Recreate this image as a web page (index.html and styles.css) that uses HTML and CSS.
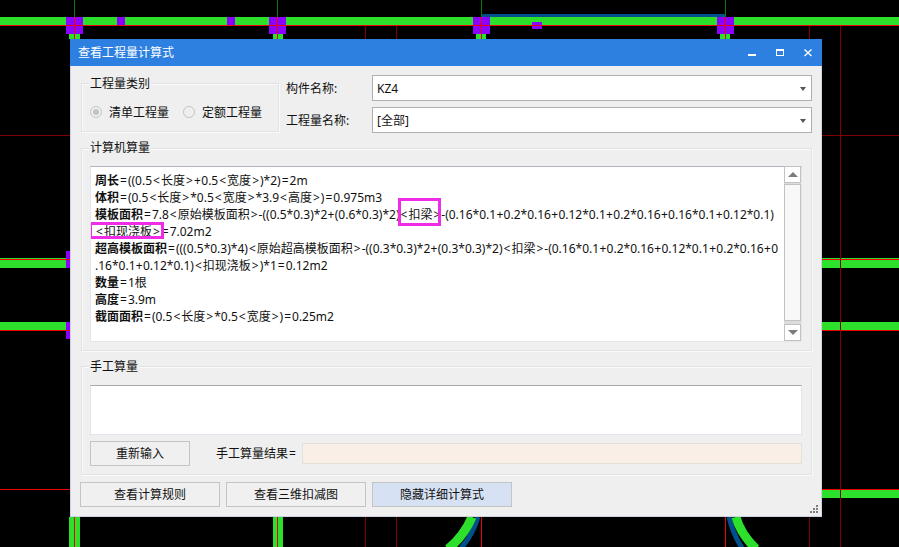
FILE: index.html
```html
<!DOCTYPE html>
<html lang="zh-CN">
<head>
<meta charset="utf-8">
<title>查看工程量计算式</title>
<link rel="stylesheet" href="styles.css">
</head>
<body>
<main class="desktop">
  <svg class="cad" width="899" height="547" viewBox="0 0 899 547" shape-rendering="crispEdges">
    <rect class="blue" x="482" y="14" width="243" height="3"/>
    <rect class="green" x="0" y="17" width="899" height="8"/>
    <rect class="green" x="0" y="258" width="899" height="10"/>
    <rect class="green" x="0" y="322" width="899" height="9"/>
    <rect class="green" x="822" y="490" width="77" height="8"/>
    <rect class="green" x="69" y="34" width="11" height="5"/>
    <rect class="green" x="273" y="34" width="10" height="5"/>
    <rect class="green" x="476" y="34" width="10" height="5"/>
    <rect class="green" x="720" y="34" width="10" height="5"/>
    <rect class="green" x="69" y="517" width="11" height="30"/>
    <rect class="green" x="273" y="517" width="10" height="30"/>
    <g shape-rendering="auto">
      <path class="arc-blue" d="M478 517Q472 536 461 548"/>
      <path class="arc-green" d="M472 517Q464 536 448 549"/>
      <path class="arc-blue" d="M729 517Q733 534 742 548"/>
      <path class="arc-green" d="M736 517Q740 533 756 549"/>
    </g>
    <rect class="dgreen" x="74" y="0" width="1" height="17"/>
    <rect class="dgreen" x="277" y="0" width="1" height="17"/>
    <rect class="dgreen" x="481" y="0" width="1" height="17"/>
    <rect class="dgreen" x="725" y="0" width="1" height="17"/>
    <rect class="purple" x="66" y="17" width="17" height="17"/>
    <rect class="purple" x="269" y="17" width="17" height="17"/>
    <rect class="purple" x="473" y="17" width="17" height="17"/>
    <rect class="purple" x="717" y="17" width="17" height="17"/>
    <rect class="purple" x="117" y="17" width="8" height="8"/>
    <rect class="purple" x="227" y="17" width="8" height="8"/>
    <rect class="purple" x="532" y="22" width="10" height="7"/>
    <rect class="purple" x="66" y="251" width="4" height="17"/>
    <rect class="purple" x="66" y="322" width="4" height="17"/>
    <rect class="red" x="0" y="25" width="899" height="1"/>
    <rect class="red" x="0" y="259" width="899" height="1"/>
    <rect class="red" x="0" y="330" width="899" height="1"/>
    <rect class="red" x="0" y="489" width="899" height="1"/>
    <rect class="red" x="74" y="17" width="1" height="22"/>
    <rect class="red" x="277" y="17" width="1" height="22"/>
    <rect class="red" x="481" y="17" width="1" height="22"/>
    <rect class="red" x="725" y="17" width="1" height="22"/>
    <rect class="red" x="74" y="517" width="1" height="30"/>
    <rect class="red" x="277" y="517" width="1" height="30"/>
    <rect class="red" x="481" y="517" width="1" height="30"/>
    <rect class="red" x="725" y="517" width="1" height="30"/>
    <rect class="dred" x="0" y="135" width="899" height="1"/>
    <rect class="dred" x="365" y="26" width="1" height="13"/>
    <rect class="dred" x="396" y="26" width="1" height="13"/>
    <rect class="dred" x="365" y="517" width="1" height="30"/>
    <rect class="dred" x="396" y="517" width="1" height="30"/>
    <rect class="dred" x="809" y="26" width="1" height="521"/>
    <rect class="dred" x="840" y="26" width="1" height="521"/>
  </svg>

  <section class="dialog">
    <header class="titlebar">
      <h1 class="title">查看工程量计算式</h1>
      <div class="winctl">
        <svg class="winicon" width="8" height="8" viewBox="0 0 8 8" shape-rendering="crispEdges"><rect x="0" y="5" width="8" height="2" fill="#fff"/></svg>
        <svg class="winicon" width="8" height="8" viewBox="0 0 8 8" shape-rendering="crispEdges"><path d="M0 0h8v7H0zM1 2v4h6V2z" fill="#fff" fill-rule="evenodd"/></svg>
        <svg class="winicon" width="8" height="8" viewBox="0 0 8 8"><path d="M.5.5l7 6.5M7.5.5l-7 6.5" stroke="#fff" stroke-width="1.3" fill="none"/></svg>
      </div>
    </header>

    <div class="body">
      <div class="toprow">
        <div class="group group-type">
          <span class="legend">工程量类别</span>
          <div class="radios">
            <span class="radio"><i class="dot on"></i>清单工程量</span>
            <span class="radio"><i class="dot"></i>定额工程量</span>
          </div>
        </div>
        <div class="fields">
          <label class="fieldlabel">构件名称:</label>
          <div class="combo">KZ4<i class="caret"></i></div>
          <label class="fieldlabel">工程量名称:</label>
          <div class="combo">[全部]<i class="caret"></i></div>
        </div>
      </div>

      <div class="group group-calc">
        <span class="legend">计算机算量</span>
        <div class="memo">
          <div class="formula"><b>周长</b><span class="op">=</span>((0.5<span class="op">&lt;</span>长度<span class="op">&gt;</span><span class="plus">+</span>0.5<span class="op">&lt;</span>宽度<span class="op">&gt;</span>)*2)<span class="op">=</span>2m<br>
<b>体积</b><span class="op">=</span>(0.5<span class="op">&lt;</span>长度<span class="op">&gt;</span>*0.5<span class="op">&lt;</span>宽度<span class="op">&gt;</span>*3.9<span class="op">&lt;</span>高度<span class="op">&gt;</span>)<span class="op">=</span>0.975m3<br>
<b>模板面积</b><span class="op">=</span>7.8<span class="op">&lt;</span>原始模板面积<span class="op">&gt;</span>-((0.5*0.3)*2<span class="plus">+</span>(0.6*0.3)*2)<span class="mark mark-beam"><span class="op">&lt;</span>扣梁<span class="op">&gt;</span></span>-(0.16*0.1<span class="plus">+</span>0.2*0.16<span class="plus">+</span>0.12*0.1<span class="plus">+</span>0.2*0.16<span class="plus">+</span>0.16*0.1<span class="plus">+</span>0.12*0.1)<br>
<span class="mark mark-slab"><span class="op">&lt;</span>扣现浇板<span class="op">&gt;</span></span><span class="op">=</span>7.02m2<br>
<b>超高模板面积</b><span class="op">=</span>(((0.5*0.3)*4)<span class="op">&lt;</span>原始超高模板面积<span class="op">&gt;</span>-((0.3*0.3)*2<span class="plus">+</span>(0.3*0.3)*2)<span class="op">&lt;</span>扣梁<span class="op">&gt;</span>-(0.16*0.1<span class="plus">+</span>0.2*0.16<span class="plus">+</span>0.12*0.1<span class="plus">+</span>0.2*0.16<span class="plus">+</span>0<br>
.16*0.1<span class="plus">+</span>0.12*0.1)<span class="op">&lt;</span>扣现浇板<span class="op">&gt;</span>)*1<span class="op">=</span>0.12m2<br>
<b>数量</b><span class="op">=</span>1根<br>
<b>高度</b><span class="op">=</span>3.9m<br>
<b>截面面积</b><span class="op">=</span>(0.5<span class="op">&lt;</span>长度<span class="op">&gt;</span>*0.5<span class="op">&lt;</span>宽度<span class="op">&gt;</span>)<span class="op">=</span>0.25m2</div>
          <div class="scrollbar">
            <div class="sbtn"><i class="tri-up"></i></div>
            <div class="strack"></div>
            <div class="sbtn"><i class="tri-down"></i></div>
          </div>
        </div>
      </div>

      <div class="group group-manual">
        <span class="legend">手工算量</span>
        <div class="manual-input"></div>
        <div class="manual-row">
          <button class="btn btn-reset" type="button">重新输入</button>
          <span class="result-label">手工算量结果<span class="op">=</span></span>
          <div class="result"></div>
        </div>
      </div>

      <div class="actions">
        <button class="btn btn-action" type="button">查看计算规则</button>
        <button class="btn btn-action" type="button">查看三维扣减图</button>
        <button class="btn btn-action btn-active" type="button">隐藏详细计算式</button>
      </div>
      <svg class="grip" width="8" height="8" viewBox="0 0 8 8" shape-rendering="crispEdges"><path d="M6 0h2v2H6zM3 3h2v2H3zM6 3h2v2H6zM0 6h2v2H0zM3 6h2v2H3zM6 6h2v2H6z" fill="#7d7d7d"/></svg>
    </div>
  </section>
</main>
</body>
</html>
```

FILE: styles.css
```css
* { box-sizing: border-box; }
html, body { margin: 0; padding: 0; background: #000; }
body { font: 12px/17px "Noto Sans", "Noto Sans CJK SC", sans-serif; color: #111; overflow: hidden; }

.desktop { position: relative; width: 899px; height: 547px; overflow: hidden; background: #000; }
.cad { position: absolute; left: 0; top: 0; display: block; }
.green { fill: #2ce02c; }
.blue { fill: #00508c; }
.dgreen { fill: #0b7a0b; }
.purple { fill: #8c00ff; }
.red { fill: #f00000; }
.dred { fill: #800000; }
.arc-green { fill: none; stroke: #2ce02c; stroke-width: 9; }
.arc-blue { fill: none; stroke: #00508c; stroke-width: 5; }

.dialog { position: absolute; left: 70px; top: 39px; width: 752px; height: 478px; display: flex; flex-direction: column; }
.titlebar { height: 27px; flex: none; background: #2d7fe0; color: #fff; display: flex; align-items: center; justify-content: space-between; padding: 0 10px 0 8px; }
.title { margin: 0; font-size: 12px; font-weight: 400; line-height: 27px; }
.winctl { display: flex; gap: 20px; align-items: center; }
.winicon { display: block; }

.body { position: relative; flex: 1; background: #efefef; border: 1px solid #ccd2e2; border-top: 0; padding: 9px 9px 9px; display: flex; flex-direction: column; }

.group { position: relative; border: 1px solid #e2e2e2; box-shadow: 1px 1px 0 #fafafa, inset 1px 1px 0 #fafafa; }
.legend { position: absolute; left: 7px; top: -9px; padding: 0 1px; background: #efefef; line-height: 17px; }
.group-calc .legend { top: -10px; }

.toprow { display: flex; height: 58px; margin-left: 1px; }
.group-type { width: 198px; height: 49px; margin-top: 8px; flex: none; }
.radios { display: flex; align-items: center; gap: 14px; padding: 9px 0 0 8px; height: 100%; }
.radio { display: flex; align-items: center; gap: 7px; white-space: nowrap; }
.dot { width: 12px; height: 12px; border-radius: 50%; border: 1px solid #c4c4c4; background: #efefef; position: relative; }
.dot.on::after { content: ""; position: absolute; left: 2px; top: 2px; width: 6px; height: 6px; border-radius: 50%; background: #c2c2c2; }

.fields { flex: 1; margin-left: 7px; display: grid; grid-template-columns: 86px 1fr; grid-auto-rows: 26px; row-gap: 6px; align-items: center; }
.fieldlabel { white-space: nowrap; }
.combo { position: relative; height: 26px; border: 1px solid #b0b0b0; background: #fff; line-height: 26px; padding-left: 4px; }
.caret { position: absolute; right: 5px; top: 11px; width: 0; height: 0; border: 3px solid transparent; border-top: 4px solid #555; border-bottom: 0; }

.group-calc { margin: 15px 0 0 1px; padding: 17px 9px 8px 8px; }
.memo { height: 176px; display: flex; background: #fff; border: 1px solid #e4e6ee; border-top-color: #b3b3c0; }
.formula { flex: 1; min-width: 0; padding: 5px 0 0 4px; line-height: 17px; white-space: nowrap; color: #111; overflow: hidden; }
.formula b { font-weight: 700; }
.op { margin: 0 1px; }
.plus { margin: 0 .3px; }
.mark { position: relative; }
.mark::after { content: ""; position: absolute; border: 3px solid #f02ce6; }
.mark-beam::after { left: -2px; right: 0; top: -8px; bottom: -3px; }
.mark-slab::after { left: -6px; right: -3px; top: -1px; bottom: 1px; }

.scrollbar { width: 17px; flex: none; display: flex; flex-direction: column; background: #dcdcdc; margin-top: -1px; margin-bottom: 0; }
.sbtn { height: 17px; flex: none; background: #fff; border: 1px solid #c2c2c2; display: flex; align-items: center; justify-content: center; }
.strack { flex: 1; background: #f8f8f8; border: 1px solid #c2c2c2; margin: 1px 0 3px; }
.tri-up { width: 0; height: 0; border: 5px solid transparent; border-top: 0; border-bottom: 5px solid #7c7c7c; }
.tri-down { width: 0; height: 0; border: 5px solid transparent; border-bottom: 0; border-top: 5px solid #7c7c7c; }

.group-manual { margin: 15px 0 0 1px; padding: 18px 9px 8px 8px; }
.manual-input { height: 50px; background: #fff; border: 1px solid #e0e4ee; border-top-color: #a9a9a9; }
.manual-row { display: flex; align-items: center; height: 25px; margin-top: 6px; }
.btn { font: inherit; color: #111; padding: 0; height: 25px; background: #f0f0f0; border: 1px solid #c4c4c4; border-radius: 0; }
.btn-reset { width: 100px; flex: none; }
.result-label { margin-left: 26px; width: 86px; flex: none; white-space: nowrap; }
.result { flex: 1; height: 21px; background: #f9efe6; border: 1px solid #e4e0dc; }

.actions { display: flex; gap: 6px; margin-top: 7px; }
.btn-action { width: 140px; }
.btn-active { background: #d6e2f3; }

.grip { position: absolute; right: 3px; bottom: 3px; display: block; }
```
